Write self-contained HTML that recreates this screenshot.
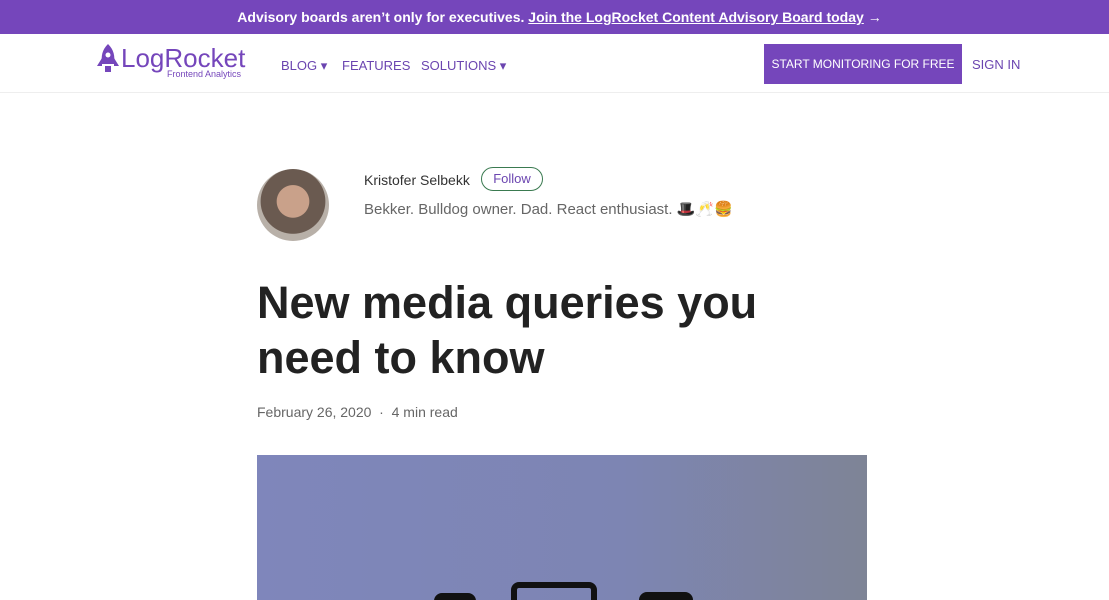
<!DOCTYPE html>
<html><head><meta charset="utf-8"><style>
body{margin:0;width:1109px;height:600px;overflow:hidden;background:#fff;font-family:"Liberation Sans",sans-serif;position:relative}
.top{height:34px;background:#7546bb;color:#fff;font-weight:bold;font-size:14px;text-align:center;line-height:34px;padding-left:10px}
.top u{text-decoration:underline}
.nav{position:absolute;top:34px;left:0;right:0;height:58px;border-bottom:1px solid #eee}
.a{position:absolute;font-size:13px;color:#6b45b0;top:24px}
.btn{position:absolute;left:764px;top:10px;width:198px;height:40px;background:#7546bb;color:#fff;font-size:12px;line-height:40px;text-align:center}
.av{position:absolute;left:257px;top:169px;width:72px;height:72px;border-radius:50%;background:radial-gradient(circle at 50% 45%,#c9a18a 0 30%,#6a5a50 31% 60%,#b8b0a8 61%)}
</style></head><body>
<div class="top">Advisory boards aren’t only for executives. <u>Join the LogRocket Content Advisory Board today</u> →</div>
<div class="nav">
<svg style="position:absolute;left:96px;top:10px" width="24" height="32" viewBox="0 0 24 32"><path d="M12 0C6 6 5 12 6 20H18C19 12 18 6 12 0Z" fill="#7546bb"/><path d="M6 14L1 22H6ZM18 14L23 22H18Z" fill="#7546bb"/><rect x="9" y="22" width="6" height="6" fill="#7546bb"/><circle cx="12" cy="11" r="2.5" fill="#fff"/></svg>
<div style="position:absolute;left:121px;top:9px;font-size:26px;color:#7546bb">LogRocket</div>
<div style="position:absolute;left:167px;top:35px;font-size:9px;color:#7546bb">Frontend Analytics</div>
<div class="a" style="left:281px">BLOG ▾</div>
<div class="a" style="left:342px">FEATURES</div>
<div class="a" style="left:421px">SOLUTIONS ▾</div>
<div class="btn">START MONITORING FOR FREE</div>
<div class="a" style="left:972px;top:23px">SIGN IN</div>
</div>
<div class="av"></div>
<div style="position:absolute;left:364px;top:172px;font-size:14px;color:#333">Kristofer Selbekk</div>
<div style="position:absolute;left:481px;top:167px;width:60px;height:22px;border:1px solid #3a7a50;border-radius:12px;font-size:13px;color:#6b45b0;text-align:center;line-height:22px">Follow</div>
<div style="position:absolute;left:364px;top:200px;font-size:15px;color:#666">Bekker. Bulldog owner. Dad. React enthusiast. 🎩🥂🍔</div>
<div style="position:absolute;left:257px;top:275px;font-size:45px;font-weight:bold;color:#222;line-height:55px;width:600px">New media queries you need to know</div>
<div style="position:absolute;left:257px;top:404px;font-size:14px;color:#666">February 26, 2020 &nbsp;·&nbsp; 4 min read</div>
<div style="position:absolute;left:257px;top:455px;width:610px;height:145px;background:linear-gradient(90deg,#7f86bb,#7d85b3 60%,#7e8496);overflow:hidden">
<div style="position:absolute;left:177px;top:138px;width:42px;height:20px;background:#111;border-radius:8px"></div>
<div style="position:absolute;left:254px;top:127px;width:74px;height:30px;border:6px solid #111;border-radius:8px"></div>
<div style="position:absolute;left:382px;top:137px;width:54px;height:20px;background:#111;border-radius:8px"></div>
</div>
</body></html>
